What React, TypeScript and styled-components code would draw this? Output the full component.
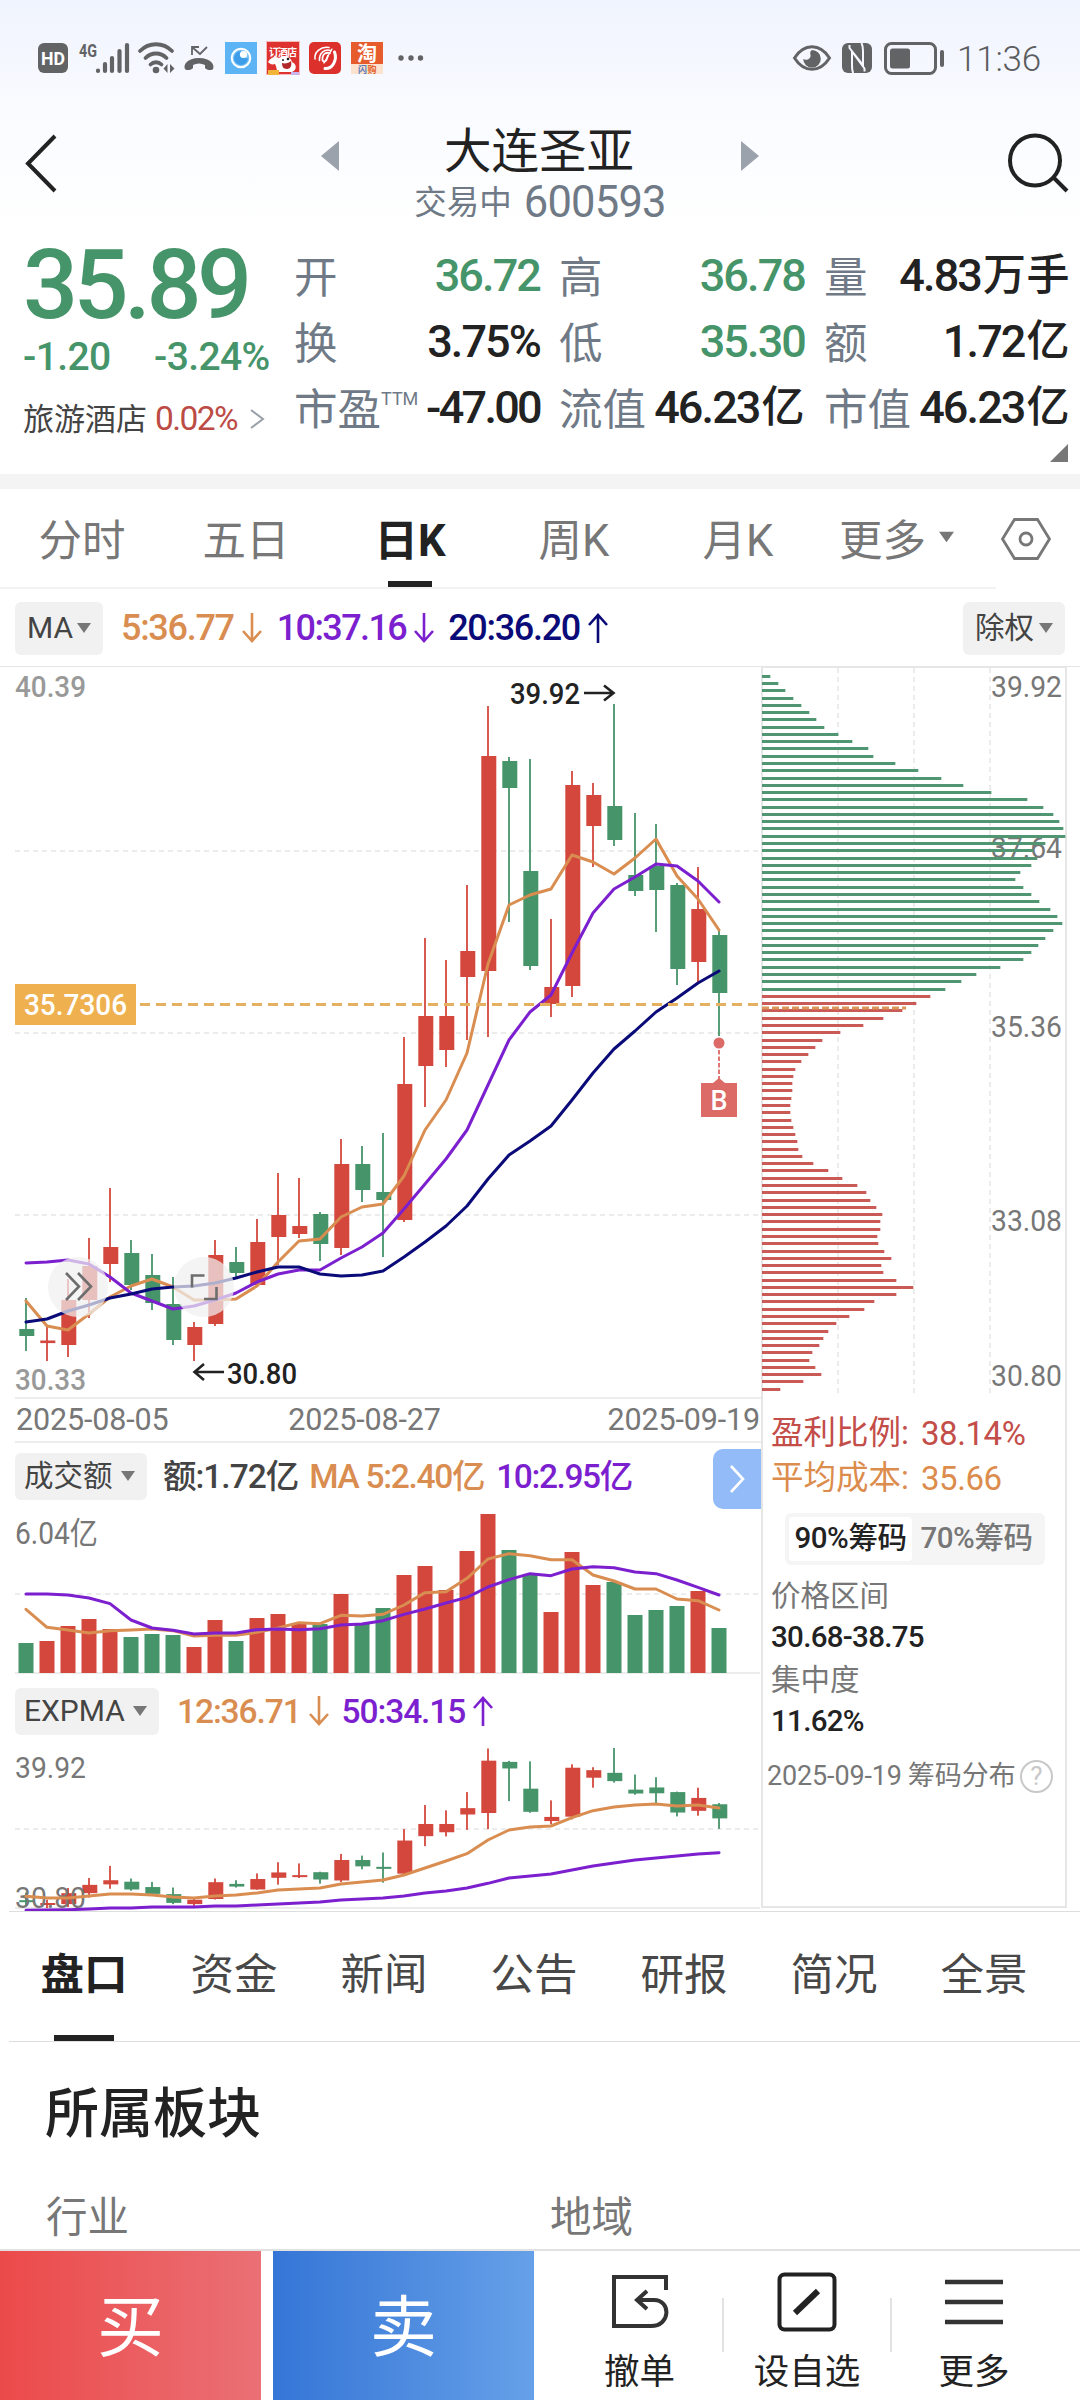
import React from "react";
import styled, { createGlobalStyle } from "styled-components";

const C = {
  red: "#d3473d",
  green: "#469469",
  orange: "#d98d50",
  purple: "#7b1fcf",
  navy: "#0a0a78",
  ink: "#222222",
  slate: "#6f7a86",
  grey: "#777777",
  line: "#e6e6e6",
  chip: "#f1f1f1",
};

const Global = createGlobalStyle`
  * { box-sizing: border-box; }
  body { margin: 0; background: #fff; }
  body, text { font-family: Roboto, "Noto Sans CJK SC", sans-serif; }
  svg { display: block; flex: none; overflow: visible; }
`;

const Screen = styled.div`
  width: 1080px;
  height: 2400px;
  display: flex;
  flex-direction: column;
  overflow: hidden;
  background: #fff;
  color: ${C.ink};
  line-height: 1;
  white-space: nowrap;
`;

const Top = styled.div`
  height: 474px;
  background: linear-gradient(#f0f4fe 0, #f3f6fe 40px, #f9fbff 110px, #fff 230px);
`;

/* ---------- status bar ---------- */

const StatusBar = styled.div`
  height: 116px;
  padding: 0 39px 0 38px;
  display: flex;
  align-items: center;
  justify-content: space-between;
  color: #626365;
`;

const StatusGroup = styled.div`
  display: flex;
  align-items: center;
`;

const Slot = styled.div<{ $gap: number }>`
  margin-left: ${(p) => p.$gap}px;
`;

const Clock = styled.span`
  margin-left: 12px;
  padding-top: 3px;
  font-size: 35px;
  font-weight: 300;
  letter-spacing: -0.2px;
  color: #5c5d5f;
`;

/* ---------- title ---------- */

const Header = styled.div`
  height: 118px;
  display: grid;
  grid-template-columns: 321px 438px 321px;
`;

const BackCell = styled.div`
  padding: 18px 0 0 24px;
`;

const SearchCell = styled.div`
  padding: 15px 10px 0 0;
  display: flex;
  justify-content: flex-end;
`;

const TitleCell = styled.div`
  display: flex;
  justify-content: space-between;
`;

const Pager = styled.div`
  padding-top: 25px;
`;

const Titles = styled.div`
  display: flex;
  flex-direction: column;
  align-items: center;
`;

const Name = styled.div`
  height: 62px;
  margin-right: 2px;
  line-height: 72px;
  font-size: 47.5px;
`;

const SubName = styled.div`
  height: 50px;
  display: flex;
  align-items: center;
  color: ${C.slate};
  font-size: 32.5px;
`;

const Code = styled.span`
  margin-left: 12px;
  font-size: 43.5px;
  letter-spacing: -0.8px;
  line-height: 50px;
`;

/* ---------- quote ---------- */

const Quote = styled.div`
  height: 240px;
  display: flex;
`;

const PriceBlock = styled.div`
  width: 294px;
  padding-left: 23px;
`;

const Price = styled.div`
  height: 100px;
  line-height: 103px;
  font-size: 97px;
  font-weight: 500;
  letter-spacing: -4.6px;
  color: ${C.green};
`;

const Change = styled.div`
  height: 47px;
  display: flex;
  align-items: center;
  font-size: 39px;
  font-weight: 500;
  letter-spacing: -0.6px;
  color: ${C.green};
`;

const ChangeAbs = styled.span`
  width: 131px;
`;

const Industry = styled.div`
  height: 76px;
  display: flex;
  align-items: center;
  font-size: 31px;
  color: #444;
`;

const IndustryPct = styled.span`
  margin: 0 13px 0 8px;
  font-size: 33.5px;
  letter-spacing: -1.6px;
  color: #bd4b45;
`;

const Stats = styled.div`
  flex: 1;
  padding-top: 8px;
  display: grid;
  grid-template-columns: repeat(3, 246px);
  grid-template-rows: repeat(3, 66px) 28px;
  column-gap: 19px;
`;

const StatCell = styled.div`
  display: flex;
  justify-content: space-between;
  align-items: center;
`;

const StatLabel = styled.span`
  padding-top: 7px;
  font-size: 43.5px;
  color: ${C.slate};
`;

const Ttm = styled.sup`
  font-size: 18px;
  line-height: 0;
  vertical-align: 20px;
`;

const StatValue = styled.span<{ $up?: boolean; $tight?: boolean }>`
  display: flex;
  align-items: center;
  font-size: 45px;
  font-weight: 500;
  letter-spacing: ${(p) => (p.$tight ? -2.7 : -1.9)}px;
  color: ${(p) => (p.$up ? C.green : C.ink)};
`;

const Unit = styled.span`
  margin-left: 2px;
  font-size: 43px;
  letter-spacing: 0.5px;
`;

const ExpandCell = styled.div`
  grid-column: 3;
  padding: 4px 2px 0 0;
  display: flex;
  justify-content: flex-end;
`;

const Band = styled.div`
  height: 15px;
  background: #f4f4f4;
`;

/* ---------- period tabs ---------- */

const Periods = styled.div`
  height: 100px;
  display: flex;
`;

const PeriodList = styled.div`
  width: 996px;
  display: flex;
  border-bottom: 2px solid #f2f2f2;
`;

const Period = styled.div<{ $on?: boolean }>`
  width: 164px;
  display: flex;
  flex-direction: column;
  align-items: center;
  padding-top: 31px;
  font-size: 43.5px;
  font-weight: ${(p) => (p.$on ? 700 : 400)};
  color: ${(p) => (p.$on ? C.ink : C.grey)};
`;

const PeriodMore = styled(Period)`
  width: 176px;
  padding-left: 19px;
  flex-direction: row;
  align-items: flex-start;
`;

const MoreMark = styled.div`
  padding: 11px 0 0 13px;
`;

const PeriodLine = styled.div`
  margin-top: 18px;
  width: 44px;
  height: 6px;
  background: ${C.ink};
`;

const SettingsCell = styled.div`
  padding: 29px 0 0 5px;
`;

/* ---------- indicator header ---------- */

const MaRow = styled.div`
  height: 78px;
  padding: 13px 15px 11px;
  display: flex;
  justify-content: space-between;
  border-bottom: 1px solid ${C.line};
`;

const Group = styled.div`
  display: flex;
  align-items: center;
`;

const Chip = styled.div<{ $w: number; $h: number; $size: number; $pad?: number }>`
  width: ${(p) => p.$w}px;
  height: ${(p) => p.$h}px;
  padding: 0 12px 0 ${(p) => p.$pad ?? 12}px;
  display: flex;
  align-items: center;
  justify-content: space-between;
  border-radius: 6px;
  background: ${C.chip};
  color: #444;
  font-size: ${(p) => p.$size}px;
`;

const Reading = styled.span<{ $c: string; $gap: number; $size?: number; $ls?: number }>`
  margin-left: ${(p) => p.$gap}px;
  display: flex;
  align-items: center;
  gap: 8px;
  font-size: ${(p) => p.$size ?? 36}px;
  font-weight: 500;
  letter-spacing: ${(p) => p.$ls ?? -1.3}px;
  color: ${(p) => p.$c};
`;

/* ---------- chart area ---------- */

const Charts = styled.div`
  height: 1244px;
  display: flex;
`;

const Plots = styled.div`
  width: 761px;
  display: flex;
  flex-direction: column;
`;

const Dates = styled.div`
  height: 46px;
  margin-left: 15px;
  padding: 0 1px;
  display: flex;
  align-items: center;
  justify-content: space-between;
  border-top: 2px solid #ededed;
  border-bottom: 2px solid #ededed;
  font-size: 30.5px;
  letter-spacing: -0.15px;
  color: ${C.grey};
`;

const DateMid = styled.span`
  margin-right: 47px;
`;

const SubHead = styled.div<{ $h: number; $top: number }>`
  height: ${(p) => p.$h}px;
  padding: ${(p) => p.$top}px 0 0 15px;
  display: flex;
  justify-content: space-between;
  align-items: flex-start;
`;

const Next = styled.div`
  margin-top: -4px;
  width: 48px;
  height: 60px;
  display: flex;
  align-items: center;
  justify-content: center;
  border-radius: 10px 0 0 10px;
  background: #93bbf8;
`;

const ChipPanel = styled.div`
  width: 306px;
  height: 1241px;
  border: 2px solid ${C.line};
  border-top-width: 1px;
  display: flex;
  flex-direction: column;
`;

const Info = styled.div`
  padding: 16px 0 0 8px;
  display: flex;
  flex-direction: column;
`;

const InfoLine = styled.div<{ $c: string }>`
  height: 45px;
  display: flex;
  align-items: center;
  font-size: 32.5px;
  color: ${(p) => p.$c};
`;

const InfoNum = styled.span`
  margin-left: 12px;
  font-size: 33px;
  letter-spacing: -0.4px;
`;

const Segment = styled.div`
  margin: 12px 0 9px 14px;
  width: 260px;
  height: 52px;
  padding: 4px;
  display: flex;
  border-radius: 6px;
  background: #f5f5f5;
`;

const SegItem = styled.div<{ $on?: boolean }>`
  width: ${(p) => (p.$on ? 123 : 129)}px;
  display: flex;
  align-items: center;
  justify-content: center;
  border-radius: 4px;
  font-size: 29.5px;
  font-weight: 500;
  letter-spacing: -0.45px;
  background: ${(p) => (p.$on ? "#fff" : "transparent")};
  color: ${(p) => (p.$on ? C.ink : C.grey)};
`;

const InfoLabel = styled.div`
  height: 42px;
  line-height: 44px;
  font-size: 29.5px;
  color: ${C.grey};
`;

const InfoValue = styled.div`
  height: 42px;
  line-height: 43px;
  font-size: 29.5px;
  font-weight: 500;
  letter-spacing: -0.7px;
`;

const InfoFoot = styled.div`
  margin: 18px 0 0 -4px;
  display: flex;
  align-items: center;
  font-size: 27px;
  color: ${C.grey};
`;

const InfoDate = styled.span`
  margin-right: 6px;
  letter-spacing: -0.15px;
`;

const Help = styled.span`
  margin-left: 4px;
  width: 33px;
  height: 33px;
  display: flex;
  align-items: center;
  justify-content: center;
  border: 2px solid #c8c8c8;
  border-radius: 50%;
  font-size: 26px;
  color: #c8c8c8;
`;

/* ---------- lower tabs and section ---------- */

const LowerTabs = styled.div`
  height: 131px;
  margin-left: 9px;
  display: flex;
  border-top: 1px solid #dedede;
  border-bottom: 1px solid #dedede;
`;

const LowerTab = styled.div<{ $on?: boolean }>`
  width: 150px;
  flex: none;
  padding-top: 42px;
  display: flex;
  flex-direction: column;
  align-items: center;
  font-size: 43.5px;
  font-weight: ${(p) => (p.$on ? 700 : 400)};
  color: ${(p) => (p.$on ? C.ink : "#484848")};
`;

const LowerLine = styled.div`
  margin-top: 38px;
  width: 60px;
  height: 6px;
  background: ${C.ink};
`;

const Section = styled.div`
  height: 208px;
  padding: 46px 0 0 45px;
`;

const SectionTitle = styled.div`
  font-size: 54px;
  font-weight: 500;
`;

const Fields = styled.div`
  margin-top: 55px;
  padding-left: 1px;
  display: grid;
  grid-template-columns: 504px 1fr;
  font-size: 41.5px;
  color: ${C.grey};
`;

/* ---------- footer ---------- */

const Footer = styled.div`
  height: 151px;
  display: flex;
  border-top: 2px solid #e2e2e2;
`;

const Trade = styled.div<{ $from: string; $to: string }>`
  width: 261px;
  margin-right: 12px;
  padding-top: 5px;
  display: flex;
  align-items: center;
  justify-content: center;
  font-size: 67px;
  color: #fff;
  background: linear-gradient(90deg, ${(p) => p.$from}, ${(p) => p.$to});
`;

const Action = styled.div<{ $w: number; $shift?: number }>`
  width: ${(p) => p.$w}px;
  padding-left: ${(p) => p.$shift ?? 0}px;
  display: flex;
  flex-direction: column;
  align-items: center;
  font-size: 35.5px;
`;

const ActionIcon = styled.div`
  height: 104px;
  padding-bottom: 3px;
  display: flex;
  align-items: center;
`;

const Divider = styled.div`
  margin-top: 47px;
  width: 2px;
  height: 54px;
  background: #e2e2e2;
`;

/* ---------- data ---------- */

type Candle = [up: number, high: number, low: number, top: number, bottom: number];

const candles: Candle[] = [
  [0, 1298, 1351, 1329, 1336], [1, 1327, 1361, 1340.5, 1343], [1, 1279, 1357, 1300, 1345],
  [1, 1238, 1318, 1266, 1300], [1, 1188, 1282, 1247, 1264], [0, 1240, 1290, 1253, 1285],
  [0, 1254, 1310, 1275, 1303], [0, 1277, 1345, 1304, 1340], [1, 1322, 1361, 1327, 1345],
  [1, 1240, 1326, 1255, 1324], [0, 1247, 1277, 1262, 1273], [1, 1219, 1286, 1242, 1285],
  [1, 1173, 1265, 1215, 1237], [1, 1178, 1238, 1226, 1234], [0, 1212, 1261, 1214, 1244],
  [1, 1139, 1255, 1164, 1248], [0, 1146, 1202, 1164, 1190], [0, 1133, 1257, 1192, 1200],
  [1, 1037, 1222, 1084, 1220], [1, 938, 1107, 1016, 1066], [1, 960, 1067, 1016, 1050],
  [1, 885, 1040, 951, 977], [1, 706, 1037, 756, 971], [0, 757, 922, 761, 788],
  [0, 759, 970, 871, 966], [1, 919, 1017, 987, 1004], [1, 771, 997, 785, 986],
  [1, 783, 867, 795, 826], [0, 704, 846, 806, 840], [0, 813, 896, 875, 891],
  [0, 824, 932, 866, 890], [0, 883, 985, 885, 969], [1, 867, 982, 909, 962],
  [0, 930, 1036, 935, 993],
];

const ma5 = [1301, 1326, 1330, 1314, 1297, 1286, 1279, 1287, 1300, 1300, 1299, 1286, 1262, 1241, 1239, 1217, 1207, 1204, 1176, 1130, 1100, 1053, 964, 905, 895, 889, 855, 862, 874, 858, 839, 876, 899, 930];
const ma10 = [1263, 1262, 1260, 1264, 1277, 1293, 1301, 1309, 1306, 1300, 1293, 1282, 1274, 1270, 1270, 1258, 1247, 1233, 1209, 1184, 1159, 1130, 1085, 1040, 1012, 995, 953, 913, 889, 877, 864, 866, 881, 902];
const ma20 = [1322, 1319, 1311, 1305, 1298, 1294, 1289, 1287, 1286, 1283, 1278, 1272, 1267, 1267, 1274, 1276, 1275, 1271, 1257, 1242, 1226, 1206, 1179, 1155, 1141, 1126, 1100, 1073, 1049, 1031, 1012, 998, 983, 971];

const volTops = [1643, 1641, 1626, 1619, 1629, 1637, 1634, 1635, 1647, 1620, 1641, 1618, 1614, 1624, 1624, 1594, 1624, 1608, 1575, 1566, 1590, 1551, 1514, 1550, 1575, 1612, 1552, 1585, 1582, 1615, 1610, 1606, 1591, 1628];
const volMa5 = [628, 682, 690, 699, 692, 690, 687, 692, 708, 706, 706, 697, 684, 668, 671, 646, 648, 643, 615, 578, 575, 535, 477, 461, 467, 479, 479, 525, 543, 567, 567, 597, 602, 630].map((v) => 1400 + v / 3);
const volMa10 = [582, 582, 585, 594, 611, 660, 684, 691, 702, 699, 699, 689, 687, 689, 686, 675, 672, 662, 643, 627, 609, 592, 561, 539, 521, 527, 507, 500, 503, 516, 521, 540, 562, 585].map((v) => 1400 + v / 3);

const exp12 = [679, 684, 684, 678, 672, 672, 675, 681, 684, 678, 675, 669, 660, 657, 654, 642, 636, 630, 615, 594, 573, 551, 510, 480, 471, 468, 443, 422, 411, 405, 402, 408, 405, 414].map((v) => 1670 + v / 3);
const exp50 = [721, 720, 719, 717, 714, 714, 711, 711, 711, 708, 708, 705, 702, 699, 696, 690, 687, 684, 678, 669, 663, 654, 640, 624, 618, 612, 600, 588, 579, 570, 564, 558, 552, 548].map((v) => 1670 + v / 3);

const profile = [61, 85, 106, 130, 154, 178, 199, 223, 265, 307, 355, 370, 436, 505, 574, 640, 724, 832, 880, 910, 928, 940, 946, 886, 850, 862, 844, 811, 796, 820, 844, 868, 901, 922, 937, 910, 886, 865, 844, 820, 751, 679, 634, 586, 541, 499, 457, 400, 340, 271, 217, 196, 175, 154, 136, 130, 127, 127, 124, 121, 121, 124, 130, 136, 142, 145, 157, 190, 235, 277, 322, 349, 361, 379, 397, 391, 391, 382, 385, 403, 424, 394, 400, 439, 490, 439, 373, 343, 298, 259, 235, 220, 208, 187, 178, 196, 214, 160, 91];

const PITCH = 21;
const FIRST = 26;
const xAt = (i: number) => FIRST + PITCH * i;
const path = (ys: number[]) => ys.map((y, i) => `${xAt(i)},${y}`).join(" ");
const tone = (up: number) => (up ? C.red : C.green);

/* ---------- small pieces ---------- */

const Caret = ({ w = 14, h = 10 }: { w?: number; h?: number }) => (
  <svg width={w} height={h} viewBox="0 0 14 10"><path d="M0 0h14L7 10z" fill="#777" /></svg>
);

const Arrow = ({ up }: { up?: boolean }) => (
  <svg width="20" height="30" viewBox="0 0 20 30" fill="none" stroke="currentColor" strokeWidth="2.6">
    <path d={up ? "M10 30V2M1 12L10 2l9 10" : "M10 0v28M1 18l9 10 9-10"} />
  </svg>
);

const Series = ({ ys, c }: { ys: number[]; c: string }) => (
  <polyline points={path(ys)} fill="none" stroke={c} strokeWidth="3" strokeLinejoin="round" strokeLinecap="round" />
);

const Dash = ({ y }: { y: number }) => (
  <line x1="15" x2="760" y1={y} y2={y} stroke="#ececec" strokeWidth="2" strokeDasharray="5 4" />
);

const Label = ({ x, y, w, c = C.grey, size = 31, weight = 400, children }: { x: number; y: number; w: number; c?: string; size?: number; weight?: number; children: string }) => (
  <text x={x} y={y} fontSize={size} fontWeight={weight} fill={c} textLength={w} lengthAdjust="spacingAndGlyphs">{children}</text>
);

const Candles = ({ map, bodyMin }: { map: (y: number) => number; bodyMin: number }) => (
  <g>
    {candles.map(([up, hi, lo, top, bottom], i) => (
      <g key={i} fill={tone(up)}>
        <rect x={xAt(i) - 1} y={map(hi)} width="2" height={map(lo) - map(hi)} opacity="0.9" />
        <rect x={xAt(i) - 6.7} y={map(top)} width="15" height={Math.max(bodyMin, map(bottom) - map(top))} />
      </g>
    ))}
  </g>
);

const MainChart = () => (
  <svg width="761" height="730" viewBox="0 667 761 730">
    <Dash y={851} /><Dash y={1033} /><Dash y={1215} />
    <Label x={15} y={697} w={71} c="#999" size={29} weight={500}>40.39</Label>
    <Label x={15} y={1389.5} w={71} c="#999" size={29} weight={500}>30.33</Label>
    <Candles map={(y) => y} bodyMin={2.6} />
    <Series ys={ma5} c={C.orange} />
    <Series ys={ma10} c={C.purple} />
    <Series ys={ma20} c={C.navy} />
    <line x1="140" x2="762" y1="1004.500" y2="1004.500" stroke="#e5b060" strokeWidth="3" strokeDasharray="10 6" />
    <rect x="15" y="984" width="121" height="41" fill="#efb04f" />
    <Label x={24} y={1015} w={103} c="#fff" size={29} weight={500}>35.7306</Label>
    <Label x={510} y={703.5} w={70} c={C.ink} size={29} weight={500}>39.92</Label>
    <path d="M584 693h29M604 685.500l9.500 7.500-9.500 7.500" fill="none" stroke={C.ink} strokeWidth="2.600" />
    <Label x={227} y={1384} w={70} c={C.ink} size={29} weight={500}>30.80</Label>
    <path d="M224 1372h-29M204 1364l-9.500 8 9.500 8" fill="none" stroke={C.ink} strokeWidth="2.600" />
    <circle cx="719" cy="1043" r="5.500" fill="#dc6a67" />
    <line x1="719" x2="719" y1="1050" y2="1079" stroke="#dc6a67" strokeWidth="1.800" strokeDasharray="4.500 2" />
    <path d="M701 1083h12l6-5 6 5h12v34h-36z" fill="#dc6a67" />
    <text x="719" y="1110" fontSize="27" fontWeight="500" fill="#fff" textAnchor="middle">B</text>
    <circle cx="78" cy="1287" r="30" fill="#f0f0f0" opacity="0.72" />
    <circle cx="204" cy="1287" r="30" fill="#f0f0f0" opacity="0.72" />
    <g fill="none" stroke="#6d6d6d" strokeWidth="2.600">
      <path d="M66 1273l13 13.500-13 13.500M78 1273l13 13.500-13 13.500" />
      <path d="M204.500 1275.500h-12.500v12M204 1299h12.500v-12" />
    </g>
  </svg>
);

const VolumeChart = () => (
  <svg width="761" height="165" viewBox="0 1509 761 165">
    <Dash y={1594} />
    <line x1="15" x2="760" y1="1673" y2="1673" stroke="#ececec" strokeWidth="2" />
    <Label x={15} y={1544} w={83} size={31}>6.04亿</Label>
    {volTops.map((top, i) => (
      <rect key={i} x={xAt(i) - 7.5} y={top} width="15" height={1673 - top} fill={tone(candles[i][0])} />
    ))}
    <Series ys={volMa5} c={C.orange} />
    <Series ys={volMa10} c={C.purple} />
  </svg>
);

const ExpChart = () => (
  <svg width="761" height="171" viewBox="0 1740 761 171">
    <Dash y={1829} />
    <line x1="15" x2="760" y1="1908" y2="1908" stroke="#ececec" strokeWidth="2" />
    <Candles map={(y) => 1748 + ((y - 704) * 160) / 657} bodyMin={2} />
    <Label x={15} y={1778} w={71} size={29}>39.92</Label>
    <Label x={15} y={1908} w={71} size={29}>30.80</Label>
    <Series ys={exp12} c={C.orange} />
    <Series ys={exp50} c={C.purple} />
  </svg>
);

const ProfileChart = () => (
  <svg width="302" height="727" viewBox="763 668 302 727">
    {[838, 914, 990].map((x) => (
      <line key={x} x1={x} x2={x} y1="668" y2="1393" stroke="#ececec" strokeWidth="2" strokeDasharray="5 4" />
    ))}
    <Label x={991} y={697} w={71} size={29}>39.92</Label>
    <Label x={991} y={858} w={71} size={29}>37.64</Label>
    <Label x={991} y={1037} w={71} size={29}>35.36</Label>
    <Label x={991} y={1231} w={71} size={29}>33.08</Label>
    <Label x={991} y={1385.5} w={71} size={29}>30.80</Label>
    {profile.map((v, i) => (
      <rect key={i} x="762" y={Math.round(674.7 + i * 7.276)} width={(v - 36) / 3} height="3" fill={i < 44 ? "#519672" : "#c95a55"} />
    ))}
    <line x1="762" x2="906" y1="1008" y2="1008" stroke="#db9558" strokeWidth="3" strokeDasharray="7 3" />
  </svg>
);

/* ---------- status glyphs ---------- */

const HdIcon = () => (
  <svg width="30" height="30" viewBox="0 0 30 30">
    <rect width="30" height="30" rx="6" fill="currentColor" />
    <text x="15" y="21.500" fontSize="18" fontWeight="700" fill="#fff" textAnchor="middle" textLength="24" lengthAdjust="spacingAndGlyphs">HD</text>
  </svg>
);

const SignalIcon = () => (
  <svg width="51" height="32" viewBox="0 0 51 32">
    <text x="0" y="14.500" fontSize="19" fontWeight="700" fill="currentColor" textLength="18" lengthAdjust="spacingAndGlyphs">4G</text>
    <g stroke="currentColor" strokeWidth="4.200" strokeLinecap="round">
      <path d="M19 28.500v.5M26 22v7M33 16v13M40.500 9v20M48 3v26" />
    </g>
  </svg>
);

const WifiIcon = () => (
  <svg width="37" height="32" viewBox="0 0 37 32">
    <g fill="none" stroke="currentColor" strokeWidth="3.800" strokeLinecap="round">
      <path d="M2 9C11 0 25 0 34 9M7.500 16c6-6 15-6 21 0M12.500 22.500c3-3 8-3 11 0" />
    </g>
    <circle cx="18" cy="28" r="3.300" fill="currentColor" />
    <path d="M29.500 22v9l-4-4.500zM32 22v9l4.500-4.500z" fill="currentColor" />
  </svg>
);

const CallIcon = () => (
  <svg width="30" height="26" viewBox="0 0 30 26">
    <path d="M8 10V2h7M8 2l8 7 7-7" fill="none" stroke="currentColor" strokeWidth="1.800" />
    <path d="M1 24c-2-4 2-11 14-11s16 7 14 11c-1 2-7 1-8-1v-3c-4-2-8-2-12 0v3c-1 2-7 3-8 1z" fill="currentColor" />
  </svg>
);

const BlueApp = () => (
  <svg width="32" height="32" viewBox="0 0 32 32">
    <rect width="32" height="32" fill="#5cb4f5" />
    <circle cx="16" cy="16" r="9.300" fill="#7cc4f6" stroke="#fff" strokeWidth="2" />
    <path d="M16 9a7 7 0 1 0 7 7c-5 1-8-2-7-7z" fill="#3d9de8" />
    <circle cx="18.500" cy="12.500" r="3.600" fill="#fff" />
  </svg>
);

const DogApp = () => (
  <svg width="34" height="34" viewBox="0 0 34 34">
    <rect width="34" height="34" fill="#f7b9b9" />
    <rect x="1" y="1" width="32" height="32" fill="#dd3230" />
    <path d="M2 21c3-5 7-6 11-4 6-3 12-1 13 4 5 2 5 8 0 10H12c-2-2-1-5-3-8-3 1-5 0-7-2z" fill="#fff" />
    <text x="17" y="15" fontSize="10" fontWeight="700" fill="#fff" textAnchor="middle" textLength="28">订酒店</text>
    <path d="M16 22c3 1 7 0 9-2 1 4 0 8-4 8s-5-3-5-6z" fill="#b3282a" />
    <circle cx="17" cy="19" r="1" fill="#222" /><circle cx="22" cy="18" r="1.300" fill="#222" />
    <rect x="2" y="29" width="11" height="5" fill="#f2b53a" />
    <rect x="25" y="31" width="8" height="3" fill="#c9b4ee" />
  </svg>
);

const SwirlApp = () => (
  <svg width="32" height="32" viewBox="0 0 32 32">
    <rect width="32" height="32" rx="5" fill="#dc302d" />
    <g fill="none" stroke="#fff" strokeLinecap="round">
      <path d="M20 5.500C12 4 5 10 6 17M22 8.500c-7-2-12 3-11.500 10" strokeWidth="1.600" />
      <path d="M21 11c-4-1-7 1-7.500 4.500-.3 3 .5 4.500 2.500 4s2-4 3-6" strokeWidth="1.800" />
      <path d="M25.500 10c3 8-2 17-9.500 16.500" strokeWidth="3" />
      <path d="M23 7l-8 14" strokeWidth="1.400" />
    </g>
  </svg>
);

const TaoApp = () => (
  <svg width="32" height="32" viewBox="0 0 32 32">
    <rect width="32" height="32" fill="#e65c2d" />
    <rect y="22" width="32" height="10" fill="#fbe3cf" />
    <text x="16" y="18.500" fontSize="20" fontWeight="700" fill="#fff" textAnchor="middle">淘</text>
    <text x="7" y="30.500" fontSize="9" fontWeight="700" fill="#5a78b8">闪</text>
    <text x="16.500" y="30.500" fontSize="9" fontWeight="700" fill="#e2622e">购</text>
  </svg>
);

const EyeIcon = () => (
  <svg width="38" height="26" viewBox="0 0 38 26">
    <path d="M1.500 13C11-2 27-2 36.500 13 27 28 11 28 1.500 13z" fill="none" stroke="currentColor" strokeWidth="3" />
    <path d="M19 5a8.800 8.800 0 1 1-8.800 9c3 2 8 0 7.300-4-.2-2-1-3 1.500-5z" fill="currentColor" />
  </svg>
);

const NfcIcon = () => (
  <svg width="30" height="30" viewBox="0 0 30 30">
    <rect width="30" height="30" rx="6" fill="currentColor" />
    <path d="M8 0c-1 3-.5 5-.5 8v14c0 3 0 6 .8 8M21.500 0c1 3 .8 5 .8 8v14c0 3 .2 6-.8 8" fill="none" stroke="#f5f8fe" strokeWidth="0" />
    <path d="M7.500 2v3L21 22V8c0-3-.5-6-1.500-8M22.500 28.500v-3L10 8.500V22c0 3 .2 6 1.200 8" fill="none" stroke="#f5f8fe" strokeWidth="2" />
  </svg>
);

const BatteryIcon = () => (
  <svg width="61" height="33" viewBox="0 0 61 33">
    <rect x="1.500" y="1.500" width="50" height="30" rx="6" fill="none" stroke="currentColor" strokeWidth="3" />
    <rect x="6" y="6.500" width="20" height="20" rx="2.500" fill="currentColor" />
    <rect x="56" y="8" width="4" height="17" rx="2" fill="currentColor" />
  </svg>
);

/* ---------- sections ---------- */

const Stat = ({ label, value, unit, up, ttm }: { label: string; value: string; unit?: string; up?: boolean; ttm?: boolean }) => (
  <StatCell>
    <StatLabel>{label}{ttm && <Ttm>TTM</Ttm>}</StatLabel>
    <StatValue $up={up} $tight={ttm}>{value}{unit && <Unit>{unit}</Unit>}</StatValue>
  </StatCell>
);

export default function App() {
  return (
    <Screen>
      <Global />
      <Top>
        <StatusBar>
          <StatusGroup>
            <HdIcon />
            <Slot $gap={11}><SignalIcon /></Slot>
            <Slot $gap={8}><WifiIcon /></Slot>
            <Slot $gap={9}><CallIcon /></Slot>
            <Slot $gap={11}><BlueApp /></Slot>
            <Slot $gap={9}><DogApp /></Slot>
            <Slot $gap={9}><SwirlApp /></Slot>
            <Slot $gap={10}><TaoApp /></Slot>
            <Slot $gap={15}>
              <svg width="26" height="6" viewBox="0 0 26 6" fill="#626365"><circle cx="3" cy="3" r="2.700" /><circle cx="13" cy="3" r="2.700" /><circle cx="22.500" cy="3" r="2.700" /></svg>
            </Slot>
          </StatusGroup>
          <StatusGroup>
            <EyeIcon />
            <Slot $gap={11}><NfcIcon /></Slot>
            <Slot $gap={12}><BatteryIcon /></Slot>
            <Clock>11:36</Clock>
          </StatusGroup>
        </StatusBar>
        <Header>
          <BackCell>
            <svg width="34" height="60" viewBox="0 0 34 60"><path d="M31 2L4 29.500 31 57" fill="none" stroke={C.ink} strokeWidth="4" /></svg>
          </BackCell>
          <TitleCell>
            <Pager><svg width="18" height="30"><path d="M18 0v30L0 15z" fill="#9ba2ac" /></svg></Pager>
            <Titles>
              <Name>大连圣亚</Name>
              <SubName>交易中<Code>600593</Code></SubName>
            </Titles>
            <Pager><svg width="18" height="30"><path d="M0 0v30l18-15z" fill="#9ba2ac" /></svg></Pager>
          </TitleCell>
          <SearchCell>
            <svg width="62" height="62" viewBox="0 0 62 62" fill="none" stroke={C.ink} strokeWidth="4">
              <circle cx="27" cy="29.500" r="25" /><path d="M46 47l13 13" />
            </svg>
          </SearchCell>
        </Header>
        <Quote>
          <PriceBlock>
            <Price>35.89</Price>
            <Change><ChangeAbs>-1.20</ChangeAbs>-3.24%</Change>
            <Industry>
              旅游酒店<IndustryPct>0.02%</IndustryPct>
              <svg width="14" height="20" viewBox="0 0 14 20"><path d="M1 1l12 9-12 9" fill="none" stroke="#999fa8" strokeWidth="2" /></svg>
            </Industry>
          </PriceBlock>
          <Stats>
            <Stat label="开" value="36.72" up />
            <Stat label="高" value="36.78" up />
            <Stat label="量" value="4.83" unit="万手" />
            <Stat label="换" value="3.75%" />
            <Stat label="低" value="35.30" up />
            <Stat label="额" value="1.72" unit="亿" />
            <Stat label="市盈" value="-47.00" ttm />
            <Stat label="流值" value="46.23" unit="亿" />
            <Stat label="市值" value="46.23" unit="亿" />
            <ExpandCell><svg width="18" height="18"><path d="M18 0v18H0z" fill="#777" /></svg></ExpandCell>
          </Stats>
        </Quote>
      </Top>
      <Band />
      <Periods>
        <PeriodList>
          <Period>分时</Period>
          <Period>五日</Period>
          <Period $on>日K<PeriodLine /></Period>
          <Period>周K</Period>
          <Period>月K</Period>
          <PeriodMore>更多<MoreMark><Caret w={15} h={12} /></MoreMark></PeriodMore>
        </PeriodList>
        <SettingsCell>
          <svg width="50" height="42" viewBox="0 0 50 42" fill="none" stroke="#777" strokeWidth="2.800">
            <path d="M13.500 1.500h23L48.500 21l-12 19.500h-23L1.500 21z" /><circle cx="25" cy="21" r="6" />
          </svg>
        </SettingsCell>
      </Periods>
      <MaRow>
        <Group>
          <Chip $w={88} $h={53} $size={30}>MA<Caret /></Chip>
          <Reading $c={C.orange} $gap={18}>5:36.77<Arrow /></Reading>
          <Reading $c={C.purple} $gap={15} $ls={-1.6}>10:37.16<Arrow /></Reading>
          <Reading $c={C.navy} $gap={14}>20:36.20<Arrow up /></Reading>
        </Group>
        <Chip $w={102} $h={53} $size={29.5}>除权<Caret /></Chip>
      </MaRow>
      <Charts>
        <Plots>
          <MainChart />
          <Dates><span>2025-08-05</span><DateMid>2025-08-27</DateMid><span>2025-09-19</span></Dates>
          <SubHead $h={66} $top={10}>
            <Group>
              <Chip $w={132} $h={47} $size={29.5} $pad={9}>成交额<Caret /></Chip>
              <Reading $c="#444" $gap={16} $size={33.5} $ls={-1}>额:1.72亿</Reading>
              <Reading $c={C.orange} $gap={11} $size={33.5} $ls={-1.3}>MA 5:2.40亿</Reading>
              <Reading $c={C.purple} $gap={12} $size={33.5} $ls={-1.4}>10:2.95亿</Reading>
            </Group>
            <Next>
              <svg width="16" height="28" viewBox="0 0 16 28"><path d="M2 1l12 13L2 27" fill="none" stroke="#fff" strokeWidth="2.600" /></svg>
            </Next>
          </SubHead>
          <VolumeChart />
          <SubHead $h={66} $top={14}>
            <Group>
              <Chip $w={144} $h={47} $size={30} $pad={9}>EXPMA<Caret /></Chip>
              <Reading $c={C.orange} $gap={18} $size={33.5} $ls={-1.1}>12:36.71<Arrow /></Reading>
              <Reading $c={C.purple} $gap={13} $size={33.5} $ls={-1.1}>50:34.15<Arrow up /></Reading>
            </Group>
          </SubHead>
          <ExpChart />
        </Plots>
        <ChipPanel>
          <ProfileChart />
          <Info>
            <InfoLine $c="#c34d48">盈利比例:<InfoNum>38.14%</InfoNum></InfoLine>
            <InfoLine $c="#dc8c4c">平均成本:<InfoNum>35.66</InfoNum></InfoLine>
            <Segment><SegItem $on>90%筹码</SegItem><SegItem>70%筹码</SegItem></Segment>
            <InfoLabel>价格区间</InfoLabel>
            <InfoValue>30.68-38.75</InfoValue>
            <InfoLabel>集中度</InfoLabel>
            <InfoValue>11.62%</InfoValue>
            <InfoFoot><InfoDate>2025-09-19</InfoDate>筹码分布<Help>?</Help></InfoFoot>
          </Info>
        </ChipPanel>
      </Charts>
      <LowerTabs>
        <LowerTab $on>盘口<LowerLine /></LowerTab>
        {["资金", "新闻", "公告", "研报", "简况", "全景"].map((t) => <LowerTab key={t}>{t}</LowerTab>)}
      </LowerTabs>
      <Section>
        <SectionTitle>所属板块</SectionTitle>
        <Fields><span>行业</span><span>地域</span></Fields>
      </Section>
      <Footer>
        <Trade $from="#ec4a4a" $to="#ea7075">买</Trade>
        <Trade $from="#3575d6" $to="#65a0e8">卖</Trade>
        <Action $w={176} $shift={11}>
          <ActionIcon>
            <svg width="58" height="56" viewBox="0 0 58 56" fill="none" stroke="#333" strokeWidth="4">
              <path d="M55 16V3H3v49h37c20 0 20-26 3-26H26M36 17l-10 9 10 9" />
            </svg>
          </ActionIcon>
          撤单
        </Action>
        <Divider />
        <Action $w={166}>
          <ActionIcon>
            <svg width="60" height="60" viewBox="0 0 60 60" fill="none" stroke={C.ink} strokeWidth="4">
              <rect x="2.500" y="2.500" width="55" height="55" rx="5" /><path d="M18 41l23-22" strokeWidth="6" />
            </svg>
          </ActionIcon>
          设自选
        </Action>
        <Divider />
        <Action $w={164}>
          <ActionIcon>
            <svg width="60" height="46" viewBox="0 0 60 46" stroke="#333" strokeWidth="4.500"><path d="M1 3h58M1 23h58M1 43h58" /></svg>
          </ActionIcon>
          更多
        </Action>
      </Footer>
    </Screen>
  );
}
